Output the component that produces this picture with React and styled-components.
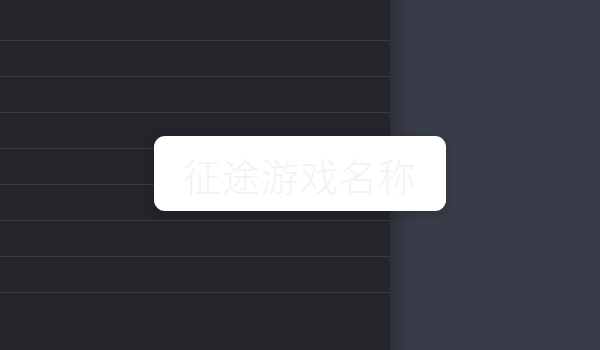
import styled, { createGlobalStyle } from "styled-components";

const GlobalStyle = createGlobalStyle`
  html, body, #root {
    margin: 0;
    padding: 0;
    width: 100%;
    height: 100%;
  }
  body {
    background: #24252b;
    font-family: "Noto Sans CJK SC", "Noto Sans", sans-serif;
    overflow: hidden;
  }
`;

const Page = styled.div`
  position: relative;
  display: flex;
  width: 600px;
  height: 350px;
  overflow: hidden;
`;

const ListPanel = styled.div`
  width: 390px;
  display: flex;
  flex-direction: column;
  background: #24252b;
`;

const Row = styled.div`
  flex: none;
  height: ${(p) => (p.first ? "41px" : "36px")};
  border-bottom: 1px solid #393a40;
  box-sizing: border-box;
`;

const SidePanel = styled.div`
  flex: 1;
  background: linear-gradient(90deg, #2e3038 0px, #363945 14px, #383c48 30px);
`;

const Toast = styled.div`
  position: absolute;
  left: 154px;
  top: 136px;
  width: 292px;
  height: 75px;
  border-radius: 11px;
  background: #ffffff;
  box-shadow: 0 3px 10px rgba(0, 0, 0, 0.18);
  display: flex;
  align-items: center;
  justify-content: center;
`;

const ToastText = styled.span`
  font-size: 38px;
  font-weight: 300;
  letter-spacing: 1px;
  color: #f3f3f3;
  line-height: 1;
  margin-top: 2px;
`;

const rows = [true, false, false, false, false, false, false, false];

export default function App() {
  return (
    <>
      <GlobalStyle />
      <Page>
        <ListPanel>
          {rows.map((first, i) => (
            <Row key={i} first={first} />
          ))}
        </ListPanel>
        <SidePanel />
        <Toast>
          <ToastText>征途游戏名称</ToastText>
        </Toast>
      </Page>
    </>
  );
}
